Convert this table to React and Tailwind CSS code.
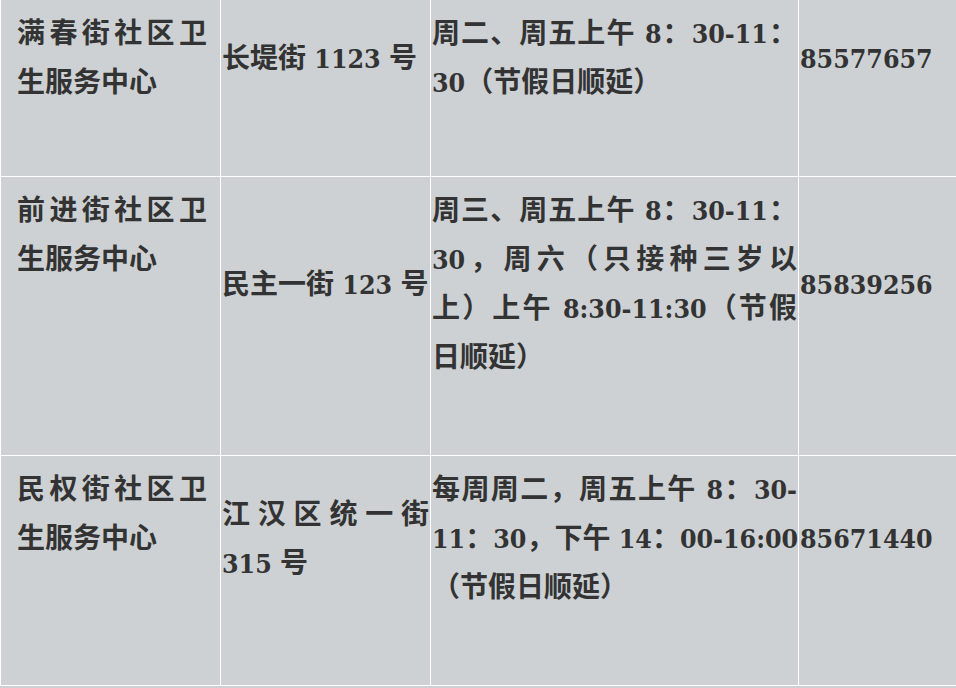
const ROWS = [
  {
    height: 'h-[177px]',
    name: ['满春街社区卫', '生服务中心'],
    addr: ['长堤街 1123 号'],
    time: ['周二、周五上午 8：30-11：', '30（节假日顺延）'],
    tel: '85577657',
  },
  {
    height: 'h-[279px]',
    name: ['前进街社区卫', '生服务中心'],
    addr: ['民主一街 123 号'],
    time: ['周三、周五上午 8：30-11：', '30，周六（只接种三岁以', '上）上午 8:30-11:30（节假', '日顺延）'],
    tel: '85839256',
  },
  {
    height: 'h-[230px]',
    name: ['民权街社区卫', '生服务中心'],
    addr: ['江汉区统一街', '315 号'],
    time: ['每周周二，周五上午 8：30-', '11：30，下午 14：00-16:00', '（节假日顺延）'],
    tel: '85671440',
  },
]

const LINE_H = 49

// latin runs (digits, spaces, dashes) are set a touch smaller than the CJK text
function Mixed({ text }) {
  return text.split(/([\x20-\x7e]+)/).map((part, i) =>
    /^[\x20-\x7e]+$/.test(part) ? (
      <span key={i} className="text-[26.5px]">
        {part}
      </span>
    ) : (
      part
    )
  )
}

function Lines({ lines }) {
  return lines.map((line, i) => (
    <div
      key={i}
      className={
        i < lines.length - 1
          ? 'whitespace-nowrap text-justify [text-align-last:justify]'
          : 'whitespace-nowrap text-left'
      }
    >
      <Mixed text={line} />
    </div>
  ))
}

function Centered({ rows, children }) {
  // vertically centred against the opening-hours column
  return (
    <div className="flex items-center" style={{ height: rows * LINE_H }}>
      <div className="w-full">{children}</div>
    </div>
  )
}

export default function App() {
  return (
    <div
      className="min-h-screen bg-[#cdd1d4] text-[28px] leading-[49px] font-bold text-[#333333]"
      style={{ fontFamily: '"DejaVu Serif Condensed", "DejaVu Serif", "Noto Sans CJK SC", serif' }}
    >
      <div className="border-l border-white">
        {ROWS.map((row) => (
          <div
            key={row.tel}
            className={`grid grid-cols-[220px_210px_368px_1fr] border-b border-white ${row.height}`}
          >
            <div className="border-r border-white pt-[9px] pl-[16px] pr-[13px]">
              <Lines lines={row.name} />
            </div>
            <div className="border-r border-white pt-[9px] pl-[1px] pr-[1px]">
              <Centered rows={row.time.length}>
                <Lines lines={row.addr} />
              </Centered>
            </div>
            <div className="relative z-10 border-r border-white pt-[9px] pl-[1px] pr-[1px]">
              <Lines lines={row.time} />
            </div>
            <div className="pt-[9px] pl-[1px]">
              <Centered rows={row.time.length}>
                <Mixed text={row.tel} />
              </Centered>
            </div>
          </div>
        ))}
      </div>
    </div>
  )
}
